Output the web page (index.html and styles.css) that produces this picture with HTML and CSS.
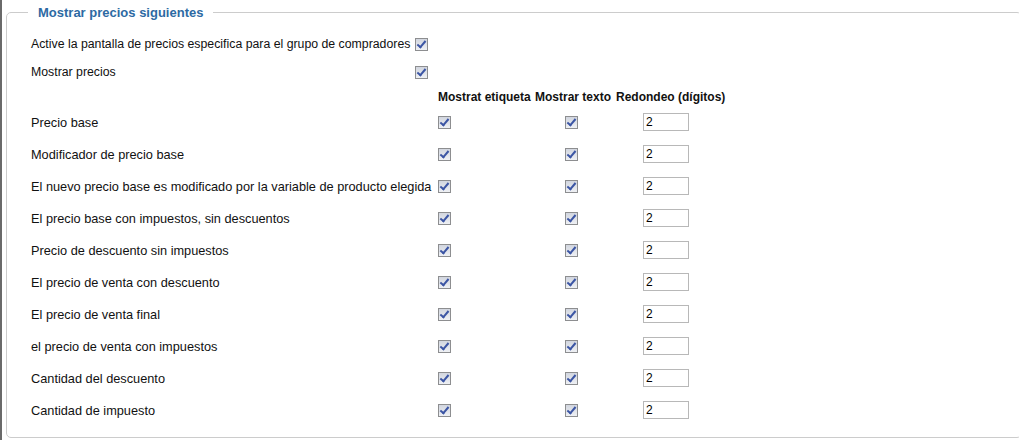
FILE: index.html
```html
<!DOCTYPE html>
<html lang="es">
<head>
<meta charset="utf-8">
<title>Mostrar precios siguientes</title>
<link rel="stylesheet" href="styles.css">
</head>
<body>
<div class="frame">
  <fieldset class="panel">
    <legend class="panel-title">Mostrar precios siguientes</legend>

    <div class="opts">
      <label class="opt-label">Active la pantalla de precios especifica para el grupo de compradores</label>
      <span class="cell"><input type="checkbox" class="chk" checked></span>
      <label class="opt-label">Mostrar precios</label>
      <span class="cell"><input type="checkbox" class="chk" checked></span>
    </div>

    <div class="grid">
      <div class="head"></div>
      <div class="head">Mostrat etiqueta</div>
      <div class="head">Mostrar texto</div>
      <div class="head">Redondeo (dígitos)</div>

      <div class="lbl">Precio base</div>
      <div class="c1"><input type="checkbox" class="chk" checked></div>
      <div class="c2"><input type="checkbox" class="chk" checked></div>
      <div class="c3"><input type="text" class="num" value="2"></div>

      <div class="lbl">Modificador de precio base</div>
      <div class="c1"><input type="checkbox" class="chk" checked></div>
      <div class="c2"><input type="checkbox" class="chk" checked></div>
      <div class="c3"><input type="text" class="num" value="2"></div>

      <div class="lbl">El nuevo precio base es modificado por la variable de producto elegida</div>
      <div class="c1"><input type="checkbox" class="chk" checked></div>
      <div class="c2"><input type="checkbox" class="chk" checked></div>
      <div class="c3"><input type="text" class="num" value="2"></div>

      <div class="lbl">El precio base con impuestos, sin descuentos</div>
      <div class="c1"><input type="checkbox" class="chk" checked></div>
      <div class="c2"><input type="checkbox" class="chk" checked></div>
      <div class="c3"><input type="text" class="num" value="2"></div>

      <div class="lbl">Precio de descuento sin impuestos</div>
      <div class="c1"><input type="checkbox" class="chk" checked></div>
      <div class="c2"><input type="checkbox" class="chk" checked></div>
      <div class="c3"><input type="text" class="num" value="2"></div>

      <div class="lbl">El precio de venta con descuento</div>
      <div class="c1"><input type="checkbox" class="chk" checked></div>
      <div class="c2"><input type="checkbox" class="chk" checked></div>
      <div class="c3"><input type="text" class="num" value="2"></div>

      <div class="lbl">El precio de venta final</div>
      <div class="c1"><input type="checkbox" class="chk" checked></div>
      <div class="c2"><input type="checkbox" class="chk" checked></div>
      <div class="c3"><input type="text" class="num" value="2"></div>

      <div class="lbl">el precio de venta con impuestos</div>
      <div class="c1"><input type="checkbox" class="chk" checked></div>
      <div class="c2"><input type="checkbox" class="chk" checked></div>
      <div class="c3"><input type="text" class="num" value="2"></div>

      <div class="lbl">Cantidad del descuento</div>
      <div class="c1"><input type="checkbox" class="chk" checked></div>
      <div class="c2"><input type="checkbox" class="chk" checked></div>
      <div class="c3"><input type="text" class="num" value="2"></div>

      <div class="lbl">Cantidad de impuesto</div>
      <div class="c1"><input type="checkbox" class="chk" checked></div>
      <div class="c2"><input type="checkbox" class="chk" checked></div>
      <div class="c3"><input type="text" class="num" value="2"></div>
    </div>
  </fieldset>
</div>
</body>
</html>
```

FILE: styles.css
```css
html, body {
  margin: 0;
  padding: 0;
  background: #fff;
}
body {
  font-family: "Liberation Sans", Arial, sans-serif;
  font-size: 12px;
  color: #111;
  width: 1019px;
  height: 440px;
  overflow: hidden;
}
.frame {
  border-left: 2px solid #6a6a6a;
  height: 440px;
  box-sizing: border-box;
  padding: 4px 0 0 4px;
}
.panel {
  margin: 0;
  width: 1016px;
  box-sizing: border-box;
  border: 1px solid #cccccc;
  border-radius: 5px;
  padding: 9px 0 11px 24px;
  min-width: 0;
}
.panel-title {
  font-size: 13px;
  font-weight: bold;
  color: #2d6aa3;
  padding: 0 10px;
  margin-left: -3px;
  line-height: 17px;
}
.opts {
  display: grid;
  grid-template-columns: 384px auto;
  grid-auto-rows: 28px;
  align-items: center;
}
.opt-label {
  white-space: nowrap;
  font-size: 12.3px;
}
.cell {
  display: flex;
  align-items: center;
}
.grid {
  display: grid;
  grid-template-columns: 407px 97px 81px auto;
  grid-template-rows: 20px;
  grid-auto-rows: 32px;
  align-items: center;
}
.head {
  font-weight: bold;
  white-space: nowrap;
  padding-top: 2px;
}
.lbl {
  white-space: nowrap;
  font-size: 12.75px;
}
.c1, .c2, .c3 {
  display: flex;
  align-items: center;
}
.c2 {
  padding-left: 30px;
}
.c3 {
  padding-left: 27px;
}
.chk {
  appearance: none;
  -webkit-appearance: none;
  margin: 0;
  width: 13px;
  height: 13px;
  box-sizing: border-box;
  border: 1px solid #8d8e90;
  background: linear-gradient(#d2d6df, #eef0f4);
  position: relative;
}
.chk:checked::after {
  content: "";
  position: absolute;
  left: 3px;
  top: 0px;
  width: 3px;
  height: 7px;
  border: solid #3b55a4;
  border-width: 0 2px 2px 0;
  transform: rotate(40deg);
}
.num {
  margin: 0;
  width: 46px;
  height: 18px;
  box-sizing: border-box;
  border: 1px solid #b8b8b8;
  padding: 0 2px;
  font-family: "Liberation Sans", Arial, sans-serif;
  font-size: 12px;
  color: #000;
  background: #fff;
}
```
